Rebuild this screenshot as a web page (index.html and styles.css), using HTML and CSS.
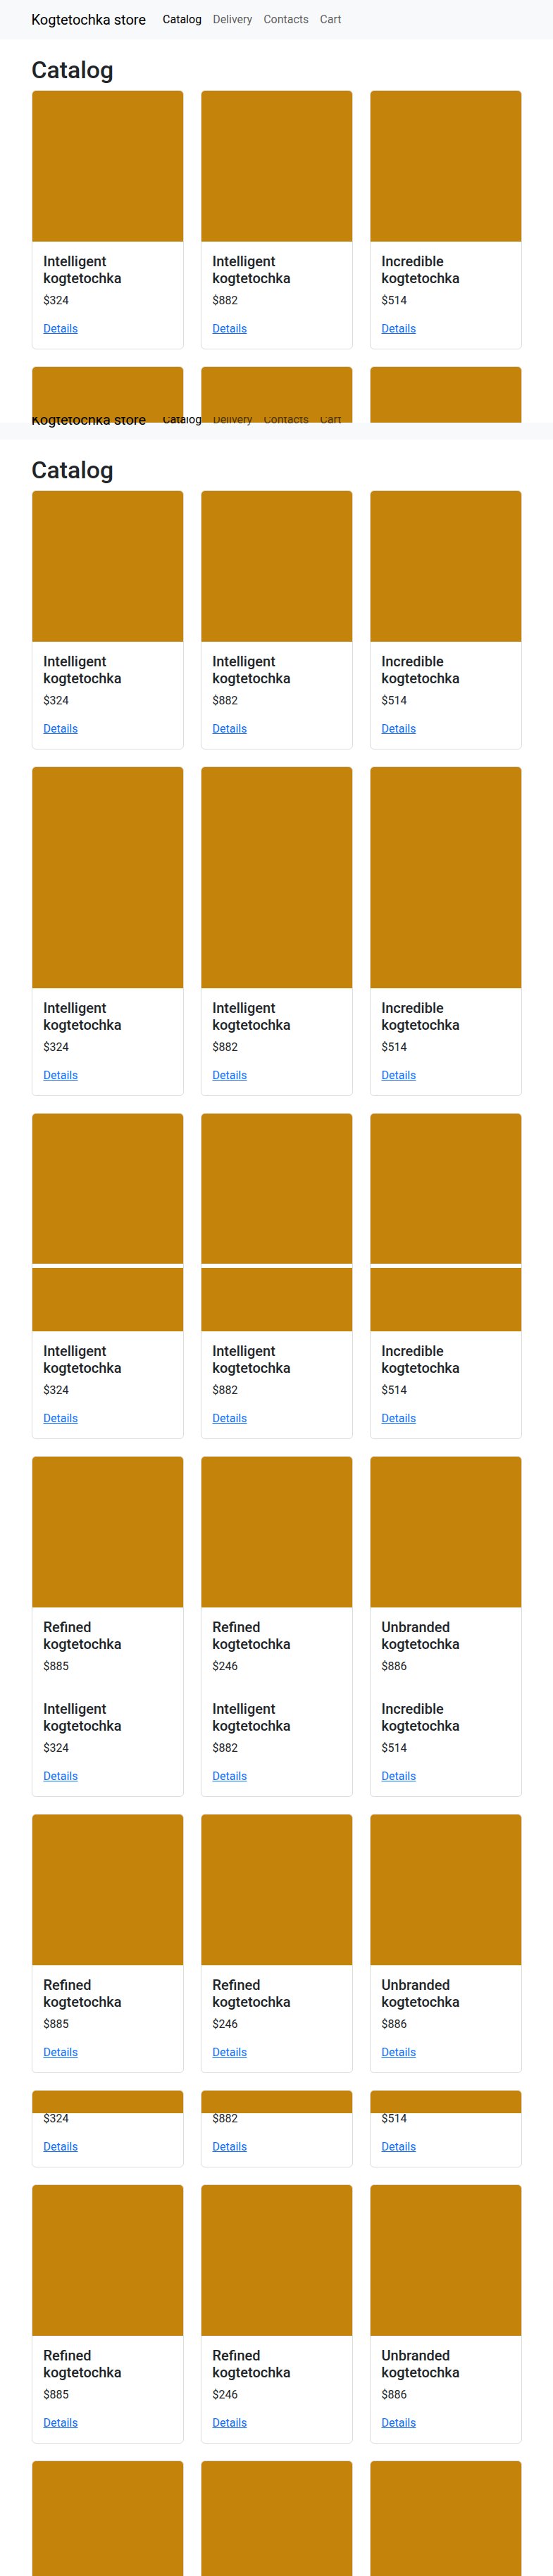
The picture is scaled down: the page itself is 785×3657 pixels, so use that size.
FILE: index.html
```html
<!DOCTYPE html>
<html lang="en">
<head>
<meta charset="utf-8">
<title>Kogtetochka store</title>
<link rel="stylesheet" href="styles.css">
</head>
<body>
<div class="screen">

  <div class="seg seg-first">
    <nav class="navbar">
      <div class="container nav-inner">
        <a class="brand" href="#">Kogtetochka store</a>
        <div class="nav">
          <a class="nav-link active" href="#">Catalog</a>
          <a class="nav-link" href="#">Delivery</a>
          <a class="nav-link" href="#">Contacts</a>
          <a class="nav-link" href="#">Cart</a>
        </div>
      </div>
    </nav>
    <main class="container page">
      <h1 class="title">Catalog</h1>
      <div class="rows">
        <div class="row">
          <div class="card"><div class="card-img"></div><div class="card-body"><h5 class="card-title">Intelligent kogtetochka</h5><p class="card-text">$324</p><a href="#" class="card-link">Details</a></div></div>
          <div class="card"><div class="card-img"></div><div class="card-body"><h5 class="card-title">Intelligent kogtetochka</h5><p class="card-text">$882</p><a href="#" class="card-link">Details</a></div></div>
          <div class="card"><div class="card-img"></div><div class="card-body"><h5 class="card-title">Incredible kogtetochka</h5><p class="card-text">$514</p><a href="#" class="card-link">Details</a></div></div>
        </div>
        <div class="row">
          <div class="card"><div class="card-img"></div></div>
          <div class="card"><div class="card-img"></div></div>
          <div class="card"><div class="card-img"></div></div>
        </div>
      </div>
    </main>
  </div>

  <div class="strip">
    <nav class="navbar navbar-ghost">
      <div class="container nav-inner">
        <a class="brand" href="#">Kogtetochka store</a>
        <div class="nav">
          <a class="nav-link active" href="#">Catalog</a>
          <a class="nav-link" href="#">Delivery</a>
          <a class="nav-link" href="#">Contacts</a>
          <a class="nav-link" href="#">Cart</a>
        </div>
      </div>
    </nav>
  </div>

  <main class="container page">
    <h1 class="title">Catalog</h1>
    <div class="rows">
      <!-- row 1 -->
      <div class="row">
        <div class="card"><div class="card-img"></div><div class="card-body"><h5 class="card-title">Intelligent kogtetochka</h5><p class="card-text">$324</p><a href="#" class="card-link">Details</a></div></div>
        <div class="card"><div class="card-img"></div><div class="card-body"><h5 class="card-title">Intelligent kogtetochka</h5><p class="card-text">$882</p><a href="#" class="card-link">Details</a></div></div>
        <div class="card"><div class="card-img"></div><div class="card-body"><h5 class="card-title">Incredible kogtetochka</h5><p class="card-text">$514</p><a href="#" class="card-link">Details</a></div></div>
      </div>
      <!-- row 2 -->
      <div class="row">
        <div class="card"><div class="card-img img-tall"></div><div class="card-body"><h5 class="card-title">Intelligent kogtetochka</h5><p class="card-text">$324</p><a href="#" class="card-link">Details</a></div></div>
        <div class="card"><div class="card-img img-tall"></div><div class="card-body"><h5 class="card-title">Intelligent kogtetochka</h5><p class="card-text">$882</p><a href="#" class="card-link">Details</a></div></div>
        <div class="card"><div class="card-img img-tall"></div><div class="card-body"><h5 class="card-title">Incredible kogtetochka</h5><p class="card-text">$514</p><a href="#" class="card-link">Details</a></div></div>
      </div>
      <!-- row 3 -->
      <div class="row">
        <div class="card"><div class="card-img img-cut"></div><div class="band"></div><div class="card-img img-rest"></div><div class="card-body"><h5 class="card-title">Intelligent kogtetochka</h5><p class="card-text">$324</p><a href="#" class="card-link">Details</a></div></div>
        <div class="card"><div class="card-img img-cut"></div><div class="band"></div><div class="card-img img-rest"></div><div class="card-body"><h5 class="card-title">Intelligent kogtetochka</h5><p class="card-text">$882</p><a href="#" class="card-link">Details</a></div></div>
        <div class="card"><div class="card-img img-cut"></div><div class="band"></div><div class="card-img img-rest"></div><div class="card-body"><h5 class="card-title">Incredible kogtetochka</h5><p class="card-text">$514</p><a href="#" class="card-link">Details</a></div></div>
      </div>
      <!-- row 4 -->
      <div class="row">
        <div class="card"><div class="card-img"></div>
          <div class="slice-head"><div class="card-body"><h5 class="card-title">Refined kogtetochka</h5><p class="card-text">$885</p><a href="#" class="card-link">Details</a></div></div>
          <div class="card-body"><h5 class="card-title">Intelligent kogtetochka</h5><p class="card-text">$324</p><a href="#" class="card-link">Details</a></div></div>
        <div class="card"><div class="card-img"></div>
          <div class="slice-head"><div class="card-body"><h5 class="card-title">Refined kogtetochka</h5><p class="card-text">$246</p><a href="#" class="card-link">Details</a></div></div>
          <div class="card-body"><h5 class="card-title">Intelligent kogtetochka</h5><p class="card-text">$882</p><a href="#" class="card-link">Details</a></div></div>
        <div class="card"><div class="card-img"></div>
          <div class="slice-head"><div class="card-body"><h5 class="card-title">Unbranded kogtetochka</h5><p class="card-text">$886</p><a href="#" class="card-link">Details</a></div></div>
          <div class="card-body"><h5 class="card-title">Incredible kogtetochka</h5><p class="card-text">$514</p><a href="#" class="card-link">Details</a></div></div>
      </div>
      <!-- row 5 -->
      <div class="row">
        <div class="card"><div class="card-img"></div><div class="card-body"><h5 class="card-title">Refined kogtetochka</h5><p class="card-text">$885</p><a href="#" class="card-link">Details</a></div></div>
        <div class="card"><div class="card-img"></div><div class="card-body"><h5 class="card-title">Refined kogtetochka</h5><p class="card-text">$246</p><a href="#" class="card-link">Details</a></div></div>
        <div class="card"><div class="card-img"></div><div class="card-body"><h5 class="card-title">Unbranded kogtetochka</h5><p class="card-text">$886</p><a href="#" class="card-link">Details</a></div></div>
      </div>
      <!-- row 6 -->
      <div class="row">
        <div class="card"><div class="card-img img-stub"></div><div class="slice-tail"><div class="card-body"><h5 class="card-title">Intelligent kogtetochka</h5><p class="card-text">$324</p><a href="#" class="card-link">Details</a></div></div></div>
        <div class="card"><div class="card-img img-stub"></div><div class="slice-tail"><div class="card-body"><h5 class="card-title">Intelligent kogtetochka</h5><p class="card-text">$882</p><a href="#" class="card-link">Details</a></div></div></div>
        <div class="card"><div class="card-img img-stub"></div><div class="slice-tail"><div class="card-body"><h5 class="card-title">Incredible kogtetochka</h5><p class="card-text">$514</p><a href="#" class="card-link">Details</a></div></div></div>
      </div>
      <!-- row 7 -->
      <div class="row">
        <div class="card"><div class="card-img"></div><div class="card-body"><h5 class="card-title">Refined kogtetochka</h5><p class="card-text">$885</p><a href="#" class="card-link">Details</a></div></div>
        <div class="card"><div class="card-img"></div><div class="card-body"><h5 class="card-title">Refined kogtetochka</h5><p class="card-text">$246</p><a href="#" class="card-link">Details</a></div></div>
        <div class="card"><div class="card-img"></div><div class="card-body"><h5 class="card-title">Unbranded kogtetochka</h5><p class="card-text">$886</p><a href="#" class="card-link">Details</a></div></div>
      </div>
      <!-- row 8 -->
      <div class="row">
        <div class="card"><div class="card-img"></div><div class="card-body"><h5 class="card-title">Refined kogtetochka</h5><p class="card-text">$885</p><a href="#" class="card-link">Details</a></div></div>
        <div class="card"><div class="card-img"></div><div class="card-body"><h5 class="card-title">Refined kogtetochka</h5><p class="card-text">$246</p><a href="#" class="card-link">Details</a></div></div>
        <div class="card"><div class="card-img"></div><div class="card-body"><h5 class="card-title">Unbranded kogtetochka</h5><p class="card-text">$886</p><a href="#" class="card-link">Details</a></div></div>
      </div>
    </div>
  </main>

</div>
</body>
</html>
```

FILE: styles.css
```css
* { box-sizing: border-box; }

html, body { margin: 0; padding: 0; background: #fff; }

body {
  font-family: Roboto, "Open Sans", "Liberation Sans", sans-serif;
  font-size: 16px;
  line-height: 1.5;
  color: #212529;
}

.screen {
  height: 3657px;
  overflow: hidden;
}

.container {
  max-width: 720px;
  margin: 0 auto;
  padding: 0 12px;
}

/* navbar */
.navbar {
  background: #f8f9fa;
  padding: 8px 0;
  height: 56px;
}
.nav-inner {
  display: flex;
  align-items: center;
}
.brand {
  font-size: 20px;
  line-height: 30px;
  padding: 5px 0;
  margin-right: 16px;
  color: #000;
  text-decoration: none;
}
.nav { display: flex; }
.nav-link {
  padding: 8px;
  line-height: 24px;
  color: rgba(0, 0, 0, 0.65);
  text-decoration: none;
}
.nav-link.active { color: #000; }

/* first captured screen */
.seg-first {
  height: 600px;
  overflow: hidden;
}

/* repeated navbar slice */
.strip {
  height: 32px;
  margin-top: -8px;
  overflow: hidden;
  background: linear-gradient(to bottom, transparent 8px, #f8f9fa 8px);
}
.navbar-ghost {
  background: transparent;
  margin-top: -24px;
}

/* page */
.page { padding-top: 24px; }

.title {
  font-size: 33.8px;
  font-weight: 500;
  line-height: 40px;
  margin: 0 0 8px;
  color: #212529;
}

.rows {
  display: flex;
  flex-direction: column;
  gap: 24px;
}
.row {
  display: grid;
  grid-template-columns: repeat(3, 1fr);
  gap: 24px;
}

/* cards */
.card {
  display: flex;
  flex-direction: column;
  background: #fff;
  border: 1px solid #dcdcdc;
  border-radius: 6px;
  overflow: hidden;
}
.card-img {
  height: 214px;
  background: #c4840c;
  flex: none;
}
.card-img.img-tall { height: 314px; }
.card-img.img-cut { height: 213px; }
.card-img.img-rest { height: 90px; }
.card-img.img-stub { height: 32px; }
.band { height: 6px; background: #fff; flex: none; }

.card-body {
  padding: 16px;
  flex: none;
}
.card-title {
  font-size: 20px;
  font-weight: 500;
  line-height: 24px;
  margin: 0 0 8px;
  color: #212529;
}
.card-text {
  margin: 0 0 16px;
  line-height: 24px;
}
.card-link {
  color: #0d6efd;
  text-decoration: underline;
}

.slice-head {
  height: 116px;
  overflow: hidden;
  flex: none;
}
.slice-tail {
  height: 76px;
  overflow: hidden;
  flex: none;
}
.slice-tail > .card-body { margin-top: -76px; }
```
